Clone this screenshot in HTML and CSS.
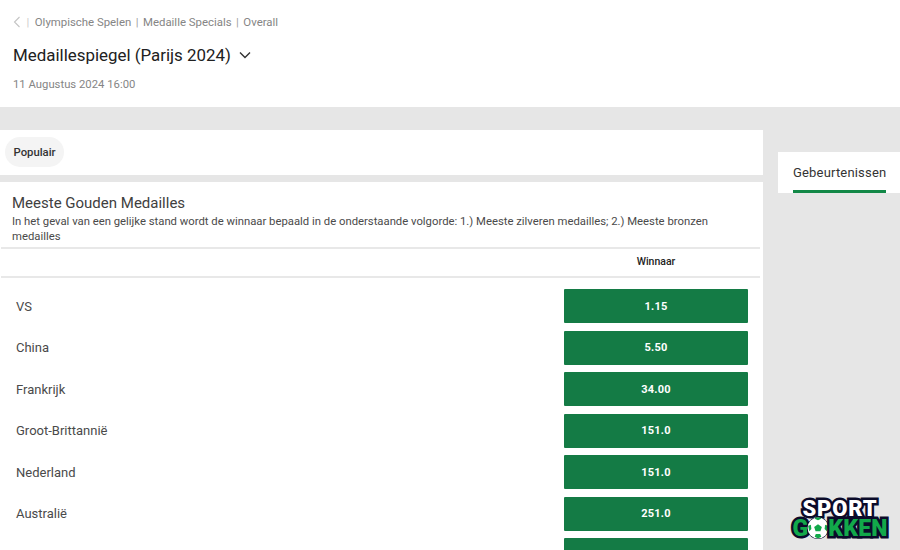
FILE: index.html
```html
<!DOCTYPE html>
<html lang="nl">
<head>
    <meta charset="UTF-8">
    <meta name="viewport" content="width=device-width, initial-scale=1.0">
    <title>Medaillespiegel (Parijs 2024)</title>
    <link rel="stylesheet" href="styles.css">
</head>
<body>

    <header class="page-header">
        <nav class="crumbs">
            <svg class="crumb-back" width="8" height="12" viewBox="0 0 8 12"><path d="M6.5 1 L1.5 6 L6.5 11" fill="none" stroke="#c4c4c4" stroke-width="1.1"/></svg>
            <span class="crumb-sep first">|</span>
            <span>Olympische Spelen</span>
            <span class="crumb-sep">|</span>
            <span>Medaille Specials</span>
            <span class="crumb-sep">|</span>
            <span>Overall</span>
        </nav>
        <div class="event-title">
            <h1>Medaillespiegel (Parijs 2024)</h1>
            <svg width="12" height="8" viewBox="0 0 12 8"><path d="M1 1.5 L6 6.5 L11 1.5" fill="none" stroke="#333" stroke-width="1.4"/></svg>
        </div>
        <div class="event-date">11 Augustus 2024 16:00</div>
    </header>

    <div class="layout">
        <main class="main-col">
            <div class="card filter-card">
                <span class="chip">Populair</span>
            </div>

            <section class="card market">
                <div class="market-head">
                    <h2>Meeste Gouden Medailles</h2>
                    <p>In het geval van een gelijke stand wordt de winnaar bepaald in de onderstaande volgorde: 1.) Meeste zilveren medailles; 2.) Meeste bronzen medailles</p>
                </div>
                <div class="col-head"><span>Winnaar</span></div>
                <div class="rows">
                    <div class="row"><span class="name">VS</span><button class="odd">1.15</button></div>
                    <div class="row"><span class="name">China</span><button class="odd">5.50</button></div>
                    <div class="row"><span class="name">Frankrijk</span><button class="odd">34.00</button></div>
                    <div class="row"><span class="name">Groot-Brittannië</span><button class="odd">151.0</button></div>
                    <div class="row"><span class="name">Nederland</span><button class="odd">151.0</button></div>
                    <div class="row"><span class="name">Australië</span><button class="odd">251.0</button></div>
                    <div class="row"><span class="name"></span><button class="odd"></button></div>
                </div>
            </section>
        </main>

        <aside class="side-col">
            <div class="tab-card">
                <span class="tab">Gebeurtenissen</span>
            </div>
        </aside>
    </div>

    <div class="logo">
        <div class="logo-top">SPORT</div>
        <div class="logo-bottom">
            <span>G</span>
            <svg class="ball" width="22" height="22" viewBox="0 0 20 20">
                <circle cx="10" cy="10" r="9.5" fill="#fff" stroke="#0b0b2a" stroke-width="1"/>
                <path d="M10 6.5 L13.5 9 L12.2 13 L7.8 13 L6.5 9 Z" fill="#12a84a"/>
                <path d="M7 1.5 L10 3 L13 1.5 L12 0.5 L8 0.5 Z M1 8 L3.5 7 L4 11 L2 13 Z M19 8 L16.5 7 L16 11 L18 13 Z M7 18 L8 15.5 L12 15.5 L13 18 L10 19.5 Z" fill="#12a84a"/>
            </svg>
            <span>KKEN</span>
        </div>
    </div>

</body>
</html>
```

FILE: styles.css
```css
:root {
    --page-bg: #e6e6e6;
    --green: #147b45;
    --tab-green: #128847;
    --line: #e8e8e8;
    --text: #404040;
    --muted: #858585;
}
html, body {
    height: 550px;
    overflow: hidden;
}
body {
    margin: 0;
    background-color: var(--page-bg);
    font-family: Roboto, "Liberation Sans", sans-serif;
    color: var(--text);
}
.page-header {
    background: #fff;
    height: 107px;
    padding: 15px 13px 0;
    box-sizing: border-box;
}
.crumbs {
    display: flex;
    align-items: center;
    gap: 4.5px;
    height: 14px;
    font-size: 11.4px;
    color: var(--muted);
}
.crumb-back {
    margin-right: 1px;
}
.crumb-sep {
    color: #a0a0a0;
}
.crumb-sep.first {
    color: #ccc;
    margin-right: 1px;
}
.event-title {
    display: flex;
    align-items: center;
    gap: 8px;
    margin-top: 10px;
}
.event-title h1 {
    margin: 0;
    font-size: 16.9px;
    font-weight: 400;
    line-height: 32px;
    color: #212121;
}
.event-date {
    margin-top: 6px;
    font-size: 11.3px;
    line-height: 16px;
    color: var(--muted);
}
.layout {
    display: flex;
    align-items: flex-start;
    padding-top: 23px;
}
.main-col {
    width: 763px;
    flex: none;
}
.card {
    background: #fff;
}
.filter-card {
    height: 45px;
    margin-bottom: 7px;
    padding: 7px 5px 0;
    box-sizing: border-box;
}
.chip {
    display: inline-block;
    height: 30px;
    line-height: 31px;
    padding: 0 8.5px;
    border-radius: 15px;
    background: #f4f4f4;
    font-size: 11.3px;
    font-weight: 500;
    color: #333;
}
.market-head {
    padding: 12px 12px 3px;
}
.market-head h2 {
    margin: 0;
    font-size: 15px;
    font-weight: 400;
    line-height: 18px;
    color: #404040;
}
.market-head p {
    margin: 2px 30px 0 0;
    font-size: 11.3px;
    line-height: 15px;
    color: #4a4a4a;
}
.col-head {
    display: flex;
    justify-content: flex-end;
    width: 759px;
    margin-left: 1px;
    height: 31px;
    box-sizing: border-box;
    border-top: 2px solid var(--line);
    border-bottom: 2px solid var(--line);
    padding-right: 12px;
}
.col-head span {
    width: 184px;
    text-align: center;
    font-size: 10.5px;
    font-weight: 500;
    line-height: 26px;
    color: #222;
}
.rows {
    display: flex;
    flex-direction: column;
    gap: 7.5px;
    padding: 11px 15px 0 16px;
}
.row {
    display: flex;
    justify-content: space-between;
    align-items: center;
}
.name {
    font-size: 13px;
    color: #4a4a4a;
}
.odd {
    width: 184px;
    height: 34px;
    padding: 0;
    border: none;
    border-radius: 1px;
    background-color: var(--green);
    color: #fff;
    font-family: inherit;
    font-size: 11px;
    font-weight: 700;
    letter-spacing: 0.2px;
}
.side-col {
    margin: 22px 0 0 15px;
    flex: 1;
}
.tab-card {
    background: #fff;
    height: 41px;
    padding-left: 15px;
}
.tab {
    display: inline-block;
    height: 41px;
    box-sizing: border-box;
    padding-top: 13px;
    border-bottom: 3px solid var(--tab-green);
    font-size: 13px;
    font-weight: 400;
    letter-spacing: 0.18px;
    color: #333;
}
/* watermark in the corner, sits over the page */
.logo {
    position: absolute;
    right: 11px;
    bottom: 12px;
    width: 98px;
    text-align: center;
    font-family: Roboto, "Liberation Sans", sans-serif;
    font-weight: 900;
}
.logo-top, .logo-bottom {
    paint-order: stroke fill;
    -webkit-text-stroke: 5px #0b0b2a;
}
.logo-top {
    font-size: 22px;
    letter-spacing: 0.8px;
    color: #fff;
    line-height: 19px;
}
.logo-bottom {
    display: flex;
    justify-content: center;
    align-items: center;
    height: 20px;
    font-size: 23px;
    letter-spacing: 0.2px;
    color: #12a84a;
}
.ball {
    flex: none;
    margin: 0 -1px;
}
```
